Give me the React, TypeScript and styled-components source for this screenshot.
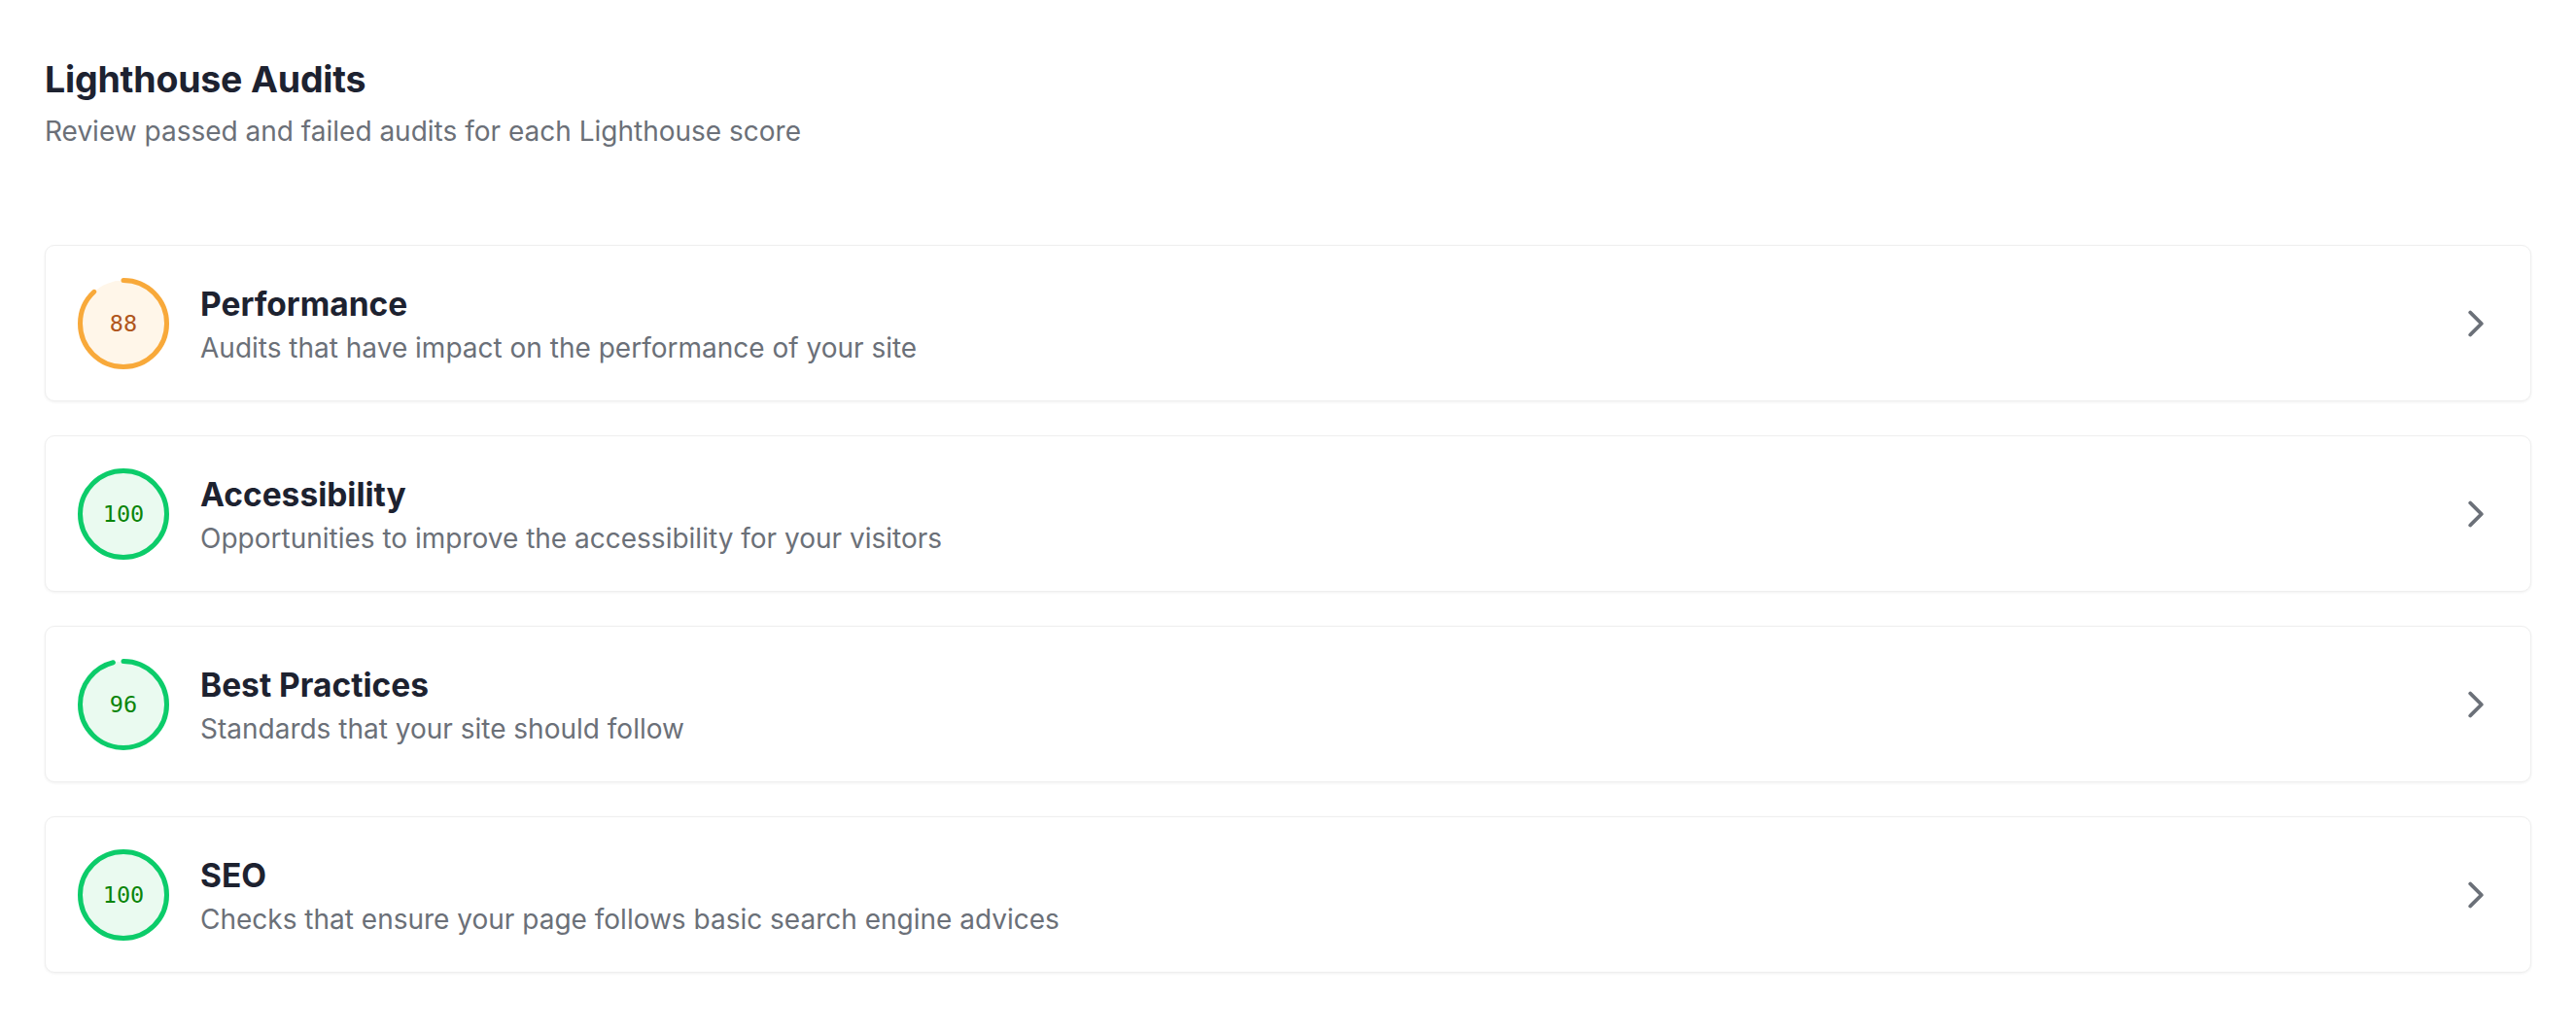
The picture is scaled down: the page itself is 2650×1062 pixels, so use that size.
import styled, { createGlobalStyle } from 'styled-components'
import { ChevronRight } from 'lucide-react'

const GlobalStyle = createGlobalStyle`
  body {
    margin: 0;
    background: #ffffff;
    font-family: Inter, 'Noto Sans', sans-serif;
  }
`

const Page = styled('div')`
  padding: 59px 46px 40px;
`

const Heading = styled('h1')`
  margin: 0;
  font-size: 37.5px;
  line-height: 46px;
  font-weight: 700;
  color: #1d2230;
  letter-spacing: -0.2px;
`

const SubHeading = styled('p')`
  margin: 11px 0 0;
  font-size: 28px;
  line-height: 38px;
  color: #6b7078;
`

const List = styled('div')`
  display: flex;
  flex-direction: column;
  gap: 35px;
  margin-top: 98px;
`

const Card = styled('div')`
  display: flex;
  align-items: center;
  gap: 32px;
  height: 161px;
  box-sizing: border-box;
  padding: 0 33px;
  background: #ffffff;
  border: 1px solid #efefef;
  border-radius: 10px;
  box-shadow: 0 1px 3px rgba(0, 0, 0, 0.06);
  cursor: pointer;
`

const Gauge = styled('div')`
  position: relative;
  width: 94px;
  height: 94px;
  flex-shrink: 0;
`

const GaugeValue = styled('span')<{ $color: string }>`
  position: absolute;
  inset: 0;
  display: flex;
  align-items: center;
  justify-content: center;
  font-family: 'DejaVu Sans Mono', 'Liberation Mono', monospace;
  font-size: 23.5px;
  color: ${(p) => p.$color};
`

const Text = styled('div')`
  flex: 1;
  display: flex;
  flex-direction: column;
  gap: 6px;
  padding-top: 5px;
`

const Title = styled('div')`
  font-size: 33.5px;
  line-height: 40px;
  font-weight: 700;
  color: #1d2230;
`

const Description = styled('div')`
  font-size: 28px;
  line-height: 38px;
  color: #6b7078;
`

const Arrow = styled(ChevronRight)`
  color: #6b7078;
  flex-shrink: 0;
`

type Audit = {
  score: number
  title: string
  description: string
}

const AUDITS: Audit[] = [
  {
    score: 88,
    title: 'Performance',
    description: 'Audits that have impact on the performance of your site',
  },
  {
    score: 100,
    title: 'Accessibility',
    description: 'Opportunities to improve the accessibility for your visitors',
  },
  {
    score: 96,
    title: 'Best Practices',
    description: 'Standards that your site should follow',
  },
  {
    score: 100,
    title: 'SEO',
    description: 'Checks that ensure your page follows basic search engine advices',
  },
]

const palette = (score: number) =>
  score >= 90
    ? { ring: '#0ccc6a', fill: '#eafaf0', text: '#0b850b' }
    : { ring: '#f8a93a', fill: '#fff6e9', text: '#b0561c' }

const ScoreGauge = ({ score }: { score: number }) => {
  const colors = palette(score)
  const r = 44.5
  const c = 2 * Math.PI * r
  const full = score >= 100

  return (
    <Gauge>
      <svg width="94" height="94" viewBox="0 0 94 94">
        <circle cx="47" cy="47" r={r} fill={colors.fill} />
        <circle
          cx="47"
          cy="47"
          r={r}
          fill="none"
          stroke={colors.ring}
          strokeWidth="5"
          strokeLinecap={full ? 'butt' : 'round'}
          strokeDasharray={`${(c * score) / 100} ${c}`}
          transform="rotate(-90 47 47)"
        />
      </svg>
      <GaugeValue $color={colors.text}>{score}</GaugeValue>
    </Gauge>
  )
}

const App = () => {
  return (
    <>
      <GlobalStyle />
      <Page>
        <Heading>Lighthouse Audits</Heading>
        <SubHeading>Review passed and failed audits for each Lighthouse score</SubHeading>
        <List>
          {AUDITS.map(({ score, title, description }) => (
            <Card key={title}>
              <ScoreGauge score={score} />
              <Text>
                <Title>{title}</Title>
                <Description>{description}</Description>
              </Text>
              <Arrow size={46} strokeWidth={2} />
            </Card>
          ))}
        </List>
      </Page>
    </>
  )
}

export default App
